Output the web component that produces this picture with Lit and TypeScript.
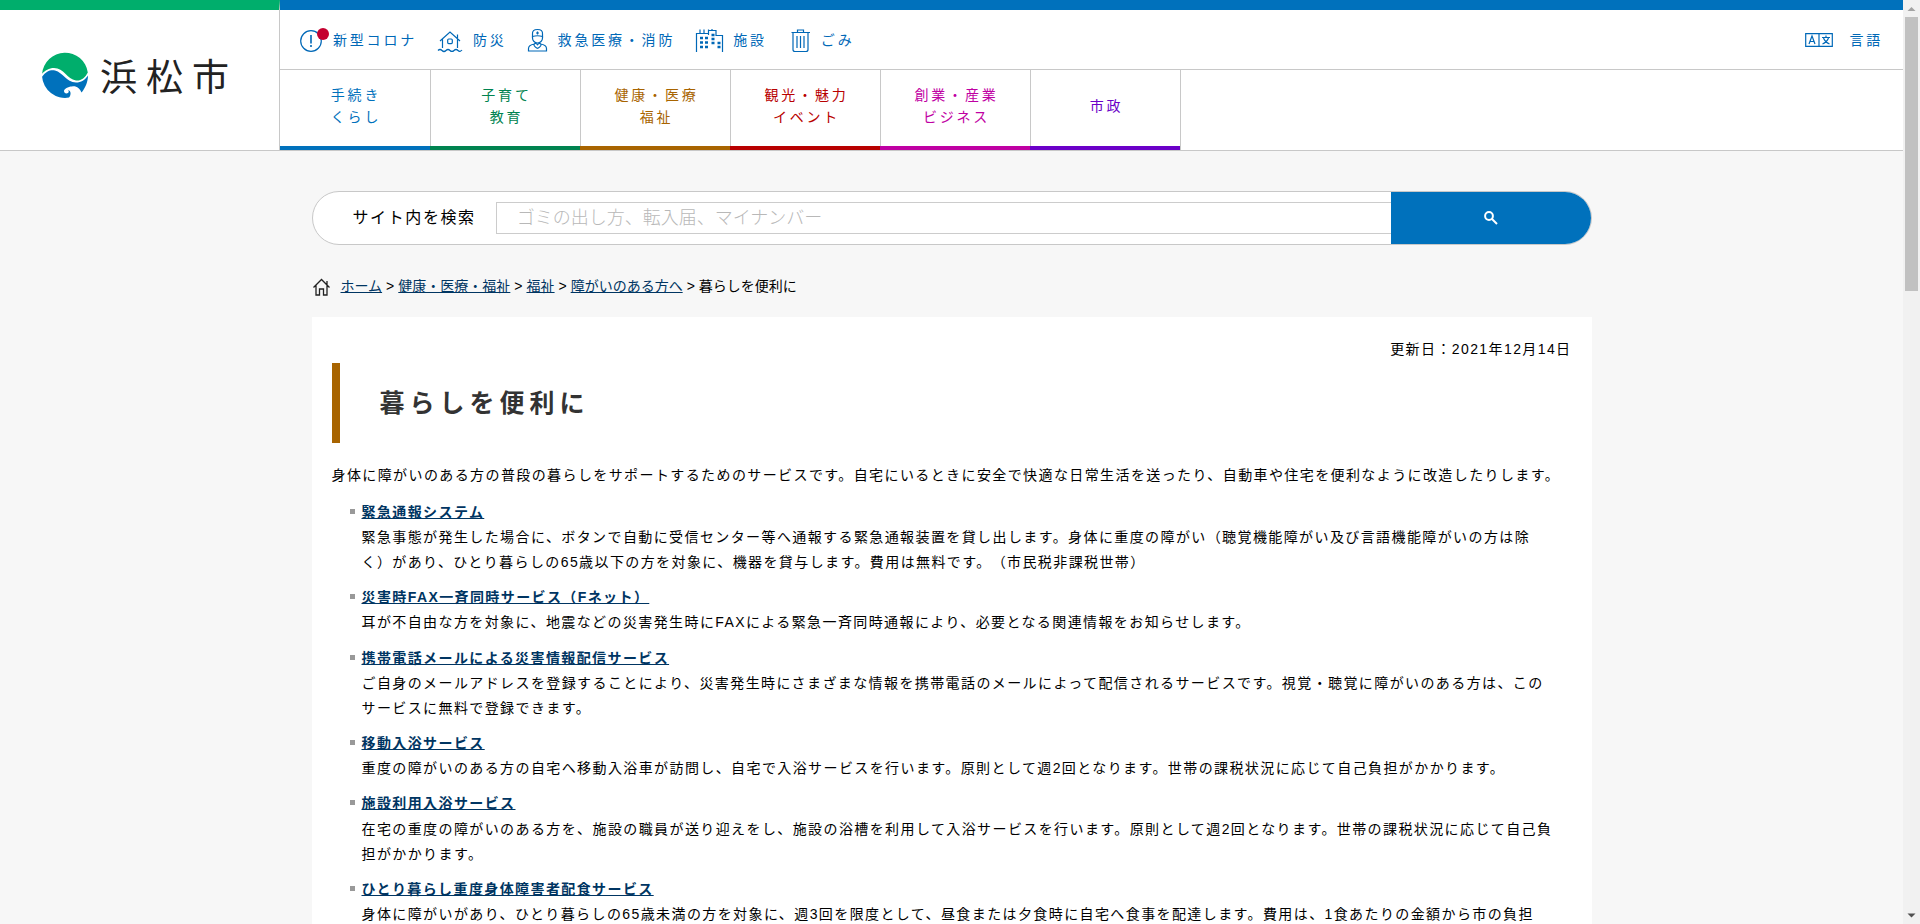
import { LitElement, html, css, svg } from "lit";
import { customElement } from "lit/decorators.js";

interface Topic { lines: string[]; tone: string; }
interface Service { title: string; text: string; }

const quick = [
  { id: "alert", label: "新型コロナ" },
  { id: "house", label: "防災" },
  { id: "nurse", label: "救急医療・消防" },
  { id: "town", label: "施設" },
  { id: "trash", label: "ごみ" },
];

const topics: Topic[] = [
  { lines: ["手続き", "くらし"], tone: "blue" },
  { lines: ["子育て", "教育"], tone: "green" },
  { lines: ["健康・医療", "福祉"], tone: "brown" },
  { lines: ["観光・魅力", "イベント"], tone: "red" },
  { lines: ["創業・産業", "ビジネス"], tone: "magenta" },
  { lines: ["市政"], tone: "violet" },
];

const crumbs = ["ホーム", "健康・医療・福祉", "福祉", "障がいのある方へ"];

const services: Service[] = [
  { title: "緊急通報システム", text: "緊急事態が発生した場合に、ボタンで自動に受信センター等へ通報する緊急通報装置を貸し出します。身体に重度の障がい（聴覚機能障がい及び言語機能障がいの方は除く）があり、ひとり暮らしの65歳以下の方を対象に、機器を貸与します。費用は無料です。（市民税非課税世帯）" },
  { title: "災害時FAX一斉同時サービス（Fネット）", text: "耳が不自由な方を対象に、地震などの災害発生時にFAXによる緊急一斉同時通報により、必要となる関連情報をお知らせします。" },
  { title: "携帯電話メールによる災害情報配信サービス", text: "ご自身のメールアドレスを登録することにより、災害発生時にさまざまな情報を携帯電話のメールによって配信されるサービスです。視覚・聴覚に障がいのある方は、このサービスに無料で登録できます。" },
  { title: "移動入浴サービス", text: "重度の障がいのある方の自宅へ移動入浴車が訪問し、自宅で入浴サービスを行います。原則として週2回となります。世帯の課税状況に応じて自己負担がかかります。" },
  { title: "施設利用入浴サービス", text: "在宅の重度の障がいのある方を、施設の職員が送り迎えをし、施設の浴槽を利用して入浴サービスを行います。原則として週2回となります。世帯の課税状況に応じて自己負担がかかります。" },
  { title: "ひとり暮らし重度身体障害者配食サービス", text: "身体に障がいがあり、ひとり暮らしの65歳未満の方を対象に、週3回を限度として、昼食または夕食時に自宅へ食事を配達します。費用は、1食あたりの金額から市の負担" },
];

const icons: Record<string, { w: number; body: unknown }> = {
  alert: { w: 27, body: svg`
    <circle cx="11" cy="14" r="10.3"/><path d="M11 8v8.500M11 18v2" stroke-width="1.6"/>
    <circle cx="23" cy="7" r="6" fill="#c4002f" stroke="none"/>` },
  house: { w: 30, body: svg`
    <path d="M3 14 13 5l10 9M5.500 12V21M20.500 12V21M20.500 11V7.500"/>
    <rect x="10.700" y="12" width="4.600" height="4.600" rx="1"/>
    <path d="M1 23.500q2-2 4 0t4 0 4 0 4 0 4 0 4-.500"/>` },
  nurse: { w: 25, body: svg`
    <path d="M5.500 7q-.5-4.500 5-4.500t5 4.500v2.500q-5-1.500-10 0z"/><path d="M10.500 4.500v3M9 6h3"/>
    <path d="M5.500 9.500v1.500a5 5 0 0 0 10 0V9.500"/>
    <path d="M7.500 17q-6 1-6 4.500v2.500h18v-2.500q0-3.500-6-4.500M10.500 21.500q-5-3-3-4.800 1.500-1 3 1 1.500-2 3-1 2 1.800-3 4.800"/>` },
  town: { w: 32, body: svg`
    <path d="M1.500 25V6.500h12V8M13.500 3.500h7.500V8.500H27.500V25M5 6.500V2.500M9 6.500V2.500M13.500 8V2.500M17 3.500V2"/>
    <path d="M5 11h3M10 11h3M5 15.500h3M10 15.500h3M5 20h3M10 20h3M16.500 8h3M16.500 12h3M16.500 16h3M22.500 16h3M22.500 20h3" stroke-width="2.4"/>` },
  trash: { w: 28, body: svg`
    <path d="M4.500 5.500h18.500M10.500 5.500V3h6v2.500M6 5.500v17q0 2 2 2h11q2 0 2-2v-17M10 9v12M13.500 9v12M17 9v12"/>` },
};

@customElement("app-root")
export class AppRoot extends LitElement {
  static styles = css`
    :host { display: flex; height: 100vh; overflow: hidden; background: #f7f7f7; color: #000;
      font: 14px/1.8 "Liberation Sans", "Noto Sans CJK JP", sans-serif; text-spacing-trim: space-all; }
    * { box-sizing: border-box; }
    ul, ol { list-style: none; margin: 0; padding: 0; }
    p, h1, h2 { margin: 0; }
    .page { flex: 1; min-width: 0; overflow: hidden; }
    .header { display: grid; grid-template-columns: 280px 1fr; background: #fff; border-bottom: 1px solid #c8c8c8; }
    .brand { display: flex; align-items: center; border-top: 10px solid #00ae6c; border-right: 1px solid #c8c8c8; padding: 0 0 10px 42px; text-decoration: none; color: #222;
      gap: 12px; font-size: 37px; line-height: 48px; letter-spacing: 9px; }
    .brand span { padding-top: 8px; }
    .bars { border-top: 10px solid #0071bc; min-width: 0; }
    .tools { display: flex; align-items: center; justify-content: space-between; height: 60px; padding: 0 20px; border-bottom: 1px solid #c8c8c8; }
    .quick { display: flex; gap: 20px; }
    .tool { display: flex; align-items: center; gap: 6px; color: #0068b7; text-decoration: none; letter-spacing: 0.2em; line-height: 22px; }
    .lang { gap: 16px; }
    .icon { display: block; flex: none; overflow: visible; fill: none; stroke: currentColor; stroke-width: 1.2; }
    .topics { display: flex; }
    .topic { display: flex; flex-direction: column; width: 150px; height: 80px; }
    .topic a { flex: 1; display: flex; flex-direction: column; align-items: center; justify-content: center; padding: 0 0 4px 2px;
      border-left: 1px solid #c8c8c8; color: var(--tone); text-decoration: none; letter-spacing: 0.2em; line-height: 22px; }
    .topic:first-child a { border-left: 0; }
    .topic::after { content: ""; height: 4px; background: var(--tone); }
    .topics::after { content: ""; width: 1px; background: #c8c8c8; }
    .blue { --tone: #0071bc; }
    .green { --tone: #008350; }
    .brown { --tone: #a86400; }
    .red { --tone: #b80000; }
    .magenta { --tone: #bf00a3; }
    .violet { --tone: #6b00c8; }
    .main { max-width: 1280px; margin: 0 auto; }
    .search { display: flex; align-items: center; height: 54px; margin-top: 40px; border: 1px solid #c8c8c8; border-radius: 27px; overflow: hidden; background: #fff; }
    .search label { padding: 0 20px 0 40px; font-size: 16px; letter-spacing: 0.1em; }
    .search input { flex: 1; min-width: 0; height: 32px; padding: 0 20px; border: 1px solid #ccc; border-right: 0; border-radius: 0; outline: 0; background: #fff; font: inherit; font-size: 18px; font-weight: 300; color: #000; }
    .search input::placeholder { color: #b8b8b8; opacity: 1; }
    .search button { display: grid; place-items: center; width: 200px; height: 52px; padding: 0; border: 0; background: #0071bc; color: #fff; }
    .crumbs { display: flex; align-items: center; margin: 29px 0 18px; }
    .crumbs ol { display: flex; margin-left: 11px; }
    .crumbs li + li::before { content: ">"; margin: 0 4px; }
    .link { color: #003562; text-decoration: underline; }
    .card { padding: 20px; background: #fff; }
    .date { margin-bottom: 1px; text-align: right; letter-spacing: 0.1em; }
    .title { display: flex; align-items: center; min-height: 80px; border-left: 8px solid #a86400; padding-left: 40px; margin-bottom: 20px; color: #333; font-size: 25px; line-height: 36px; letter-spacing: 0.2em; }
    .lead, .service { letter-spacing: 0.1em; }
    .services { margin: 11px 15px 0 30px; }
    .service { margin-bottom: 10px; line-break: strict; }
    .service h2 { position: relative; font-size: 14px; }
    .service h2::before { content: ""; position: absolute; left: -12px; top: 9px; width: 5px; height: 5px; background: #999; }
    .scroll { display: flex; flex-direction: column; align-items: center; width: 17px; background: #f1f1f1; }
    .scroll svg { flex: none; fill: #a3a3a3; }
    .thumb { width: 13px; height: 274px; margin-bottom: auto; background: #c1c1c1; }
  `;

  private icon(id: string) {
    const { w, body } = icons[id];
    return html`<svg class="icon" width=${w} height="26" viewBox="0 0 ${w} 26" aria-hidden="true">${body}</svg>`;
  }

  render() {
    return html`
      <div class="page">
        <header class="header">
          <a class="brand" href="#">
            <svg width="46" height="46" viewBox="0 0 46 46" aria-hidden="true">
              <path fill="#00ae6c" d="M.1 21.700A23 23 0 0 1 45.800 20.500C43 26 39 29 34 28.500 25 27 22 16 12 16 7 16 3 18.500.1 21.700z"/>
              <path fill="#0071bc" d="M.1 24.700C4 19 9 17.500 13 18.500 21 20.500 24 30 34 30.500 39 30.500 43 28 46 23.500 46 30 43 36.500 39.500 40.500 38 36.500 34 33.500 30 34.500 26 34.500 22 37 22 39 22 41 24 42 26 41 27 40 27 39 26 38 29.500 39 29 43 27 45.600A23 23 0 0 1 .1 24.700z"/>
            </svg>
            <span>浜松市</span>
          </a>
          <div class="bars">
            <div class="tools">
              <div class="quick">
                ${quick.map((q) => html`<a class="tool" href="#">${this.icon(q.id)}<span>${q.label}</span></a>`)}
              </div>
              <a class="tool lang" href="#">
                <svg class="icon" width="28" height="14" viewBox="0 0 28 14" aria-hidden="true">
                  <path d="M.7.7h26.600v12.600H.7zM14 .7v12.600M4 11l3-8 3 8M5 8.500h4M17 4.500h8M21 2.500v2M18.500 5q1.500 4 6 6M23.500 5q-1.500 4-6 6"/>
                </svg>
                <span>言語</span>
              </a>
            </div>
            <nav><ul class="topics">
              ${topics.map((t) => html`<li class="topic ${t.tone}"><a href="#">${t.lines.map((l) => html`<span>${l}</span>`)}</a></li>`)}
            </ul></nav>
          </div>
        </header>
        <main class="main">
          <form class="search" role="search">
            <label for="q">サイト内を検索</label>
            <input id="q" type="text" placeholder="ゴミの出し方、転入届、マイナンバー">
            <button type="button" aria-label="検索">
              <svg width="14" height="14" viewBox="0 0 14 14" fill="none" stroke="currentColor" stroke-width="2" aria-hidden="true"><circle cx="5" cy="5" r="3.900"/><path d="M8 8l5 5"/></svg>
            </button>
          </form>
          <nav class="crumbs">
            <svg width="18" height="18" viewBox="0 0 18 18" fill="none" stroke="#222" stroke-width="1.300" aria-hidden="true"><path d="M1.500 9.500 9.500 1.500l8 8M4 7.500V17h3.500v-6h4v6h3.500V7.500M15 6.500V3"/></svg>
            <ol>
              ${crumbs.map((c) => html`<li><a class="link" href="#">${c}</a></li>`)}
              <li>暮らしを便利に</li>
            </ol>
          </nav>
          <article class="card">
            <p class="date">更新日：2021年12月14日</p>
            <h1 class="title">暮らしを便利に</h1>
            <p class="lead">身体に障がいのある方の普段の暮らしをサポートするためのサービスです。自宅にいるときに安全で快適な日常生活を送ったり、自動車や住宅を便利なように改造したりします。</p>
            <ul class="services">
              ${services.map((s) => html`<li class="service"><h2><a class="link" href="#">${s.title}</a></h2><p>${s.text}</p></li>`)}
            </ul>
          </article>
        </main>
      </div>
      <div class="scroll" aria-hidden="true">
        <svg width="17" height="17" viewBox="0 0 17 17"><path d="M4.500 11 8.500 7l4 4z"/></svg>
        <div class="thumb"></div>
        <svg width="17" height="17" viewBox="0 0 17 17"><path fill="#505050" d="M4.500 6.500 8.500 10.500l4-4z"/></svg>
      </div>`;
  }
}
